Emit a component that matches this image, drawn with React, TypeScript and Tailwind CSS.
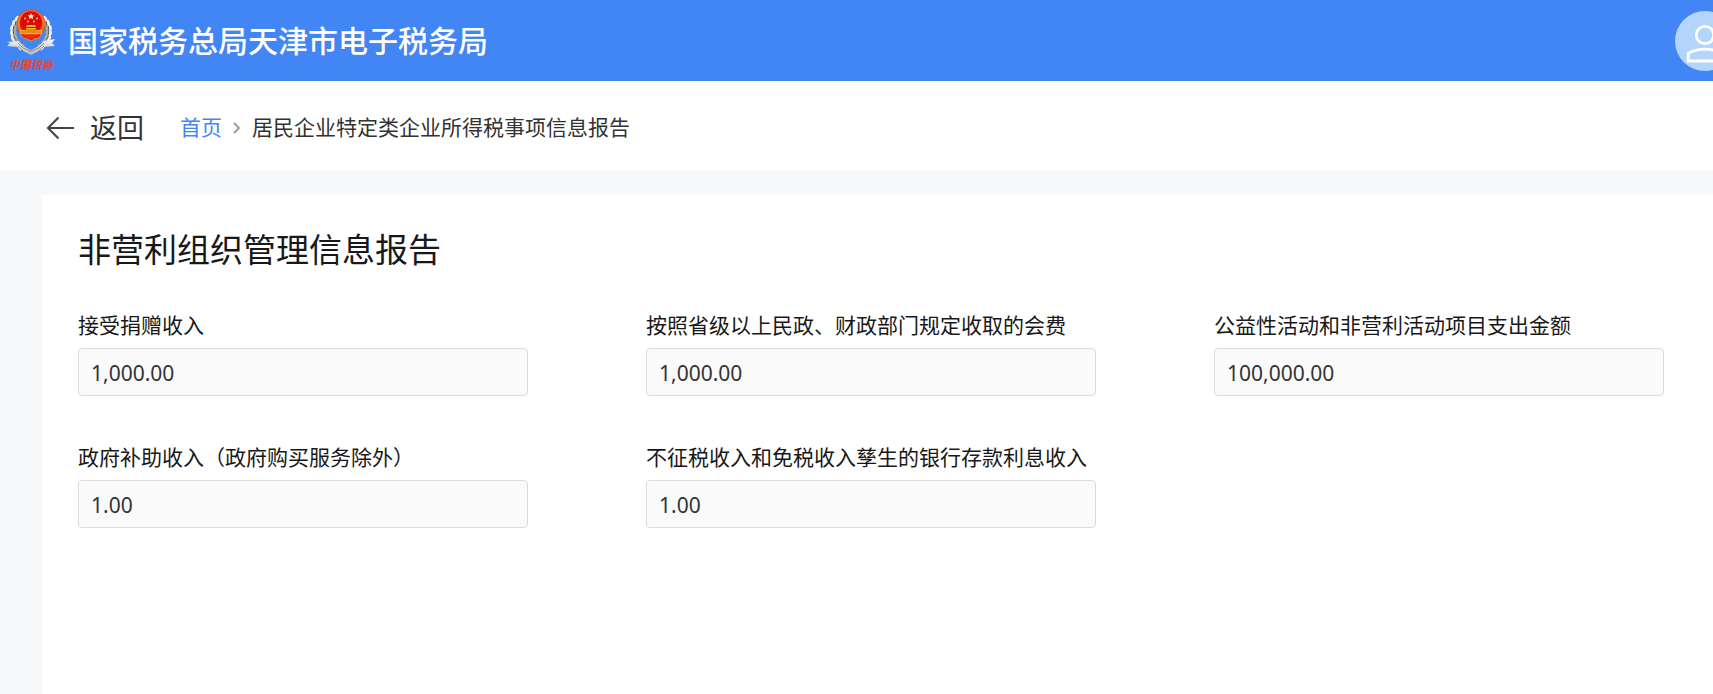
import { useId } from 'react';

interface Field {
  label: string;
  value: string;
}

const fields: Field[] = [
  { label: '接受捐赠收入', value: '1,000.00' },
  { label: '按照省级以上民政、财政部门规定收取的会费', value: '1,000.00' },
  { label: '公益性活动和非营利活动项目支出金额', value: '100,000.00' },
  { label: '政府补助收入（政府购买服务除外）', value: '1.00' },
  { label: '不征税收入和免税收入孳生的银行存款利息收入', value: '1.00' },
];

function Wreath() {
  const leaves = [
    [12, 10, 30],
    [9, 14, 15],
    [7, 19, 5],
    [7, 24, -10],
    [8, 29, -25],
    [11, 34, -40],
    [15, 38, -55],
  ];

  return (
    <g>
      {leaves.map(([x, y, angle]) => (
        <g key={y} transform={`rotate(${angle} ${x} ${y})`}>
          <ellipse cx={x - 1} cy={y} rx="1.9" ry="3" fill="#eeeeea" />
          <ellipse cx={x + 2} cy={y} rx="1.6" ry="2.8" fill="#a9aaa2" />
          <path
            d={`M${x + 0.5} ${y - 2}v4`}
            stroke="#4c4f48"
            strokeWidth="0.9"
            fill="none"
          />
        </g>
      ))}
    </g>
  );
}

function Emblem() {
  return (
    <svg viewBox="0 0 50 48" className="h-12 w-[50px]" aria-hidden="true">
      <defs>
        <linearGradient id="ribbon" x1="0" y1="0" x2="0" y2="1">
          <stop offset="0" stopColor="#f8f8f8" />
          <stop offset="1" stopColor="#b0b3b5" />
        </linearGradient>
        <radialGradient id="ring">
          <stop offset="0.72" stopColor="#e2300f" />
          <stop offset="0.86" stopColor="#f08a1c" />
          <stop offset="1" stopColor="#d94a2a" />
        </radialGradient>
      </defs>
      <Wreath />
      <g transform="matrix(-1 0 0 1 50 0)">
        <Wreath />
      </g>
      <path
        d="M1 33l11-1 5 5 8 4 8-4 5-5 11-2-3 4 3 3-11 1-7 5-6 3-6-3-7-5-11-1 3-3z"
        fill="url(#ribbon)"
      />
      <path
        d="M12 34l5 5 8 3 8-3 5-5M12 37l5 5M38 37l-5 5"
        stroke="#7b7e80"
        strokeWidth="0.8"
        fill="none"
      />
      <circle cx="25" cy="15" r="14.5" fill="url(#ring)" />
      <circle cx="25" cy="13" r="10.8" fill="#dc0810" />
      <path
        d="M14 24l5 1h12l5-1-3 5-4 1-4 2-4-2-4-1z"
        fill="#e0280f"
        stroke="#f0a028"
        strokeWidth="0.8"
      />
      <path
        d="M25 4l1 2.200 2.400.2-1.800 1.600.5 2.300-2.100-1.200-2.100 1.200.5-2.300-1.800-1.600 2.400-.2z"
        fill="#fff3b0"
      />
      <g fill="#ffd035">
        <circle cx="19" cy="9.500" r="1" />
        <circle cx="31" cy="9.500" r="1" />
        <circle cx="22" cy="12.500" r="1" />
        <circle cx="28" cy="12.500" r="1" />
        <path d="M21 16h8l1 2h-10zM20 19h10v2h6v4H14v-4h6z" fill="#f9b21f" />
      </g>
      <path
        d="M19 21h12M15 23h20M25 25v4M20 28h10"
        stroke="#d3410f"
        strokeWidth="0.8"
        fill="none"
      />
    </svg>
  );
}

function Avatar() {
  return (
    <button
      type="button"
      aria-label="用户"
      className="-mr-[22px] size-[60px] shrink-0 rounded-full bg-[#b3d4fb]"
    >
      <svg
        viewBox="0 0 60 60"
        className="size-full"
        fill="none"
        stroke="#fff"
        strokeWidth="2.8"
        aria-hidden="true"
      >
        <circle cx="30" cy="24" r="8.700" />
        <path d="M13.300 50V42.500C18 39.500 23 38.200 30 38.200S42 39.500 46.700 42.500V50z" />
      </svg>
    </button>
  );
}

function FormField({ label, value }: Field) {
  const id = useId();

  return (
    <div className="flex flex-col gap-[9px]">
      <label htmlFor={id} className="text-[21px] leading-7 whitespace-nowrap">
        {label}
      </label>
      <input
        id={id}
        type="text"
        readOnly
        defaultValue={value}
        className="h-12 w-full rounded border border-[#dcdcdc] bg-[#fafafa] px-3 pt-0.5 text-[21px] text-[#333]"
      />
    </div>
  );
}

export default function App() {
  return (
    <div className="flex min-h-screen flex-col overflow-hidden bg-[#f7f8fa] font-['Noto_Sans','Noto_Sans_CJK_SC',sans-serif] text-[#181818]">
      <header className="flex h-[81px] items-center justify-between bg-[#4285f4] pl-1.5">
        <div className="flex items-center gap-3">
          <div className="flex flex-col items-center">
            <Emblem />
            <span className="text-[11px] leading-4 font-bold text-[#dc4a3d] italic">
              中国税务
            </span>
          </div>
          <h1 className="text-[30px] leading-10 font-medium whitespace-nowrap text-white">
            国家税务总局天津市电子税务局
          </h1>
        </div>
        <Avatar />
      </header>

      <nav className="flex h-[90px] items-center bg-white pt-1 pl-[46px] text-[21px] text-[#333]">
        <button
          type="button"
          className="mr-9 flex items-center gap-4 text-[27px] leading-9"
        >
          <svg
            viewBox="0 0 28 24"
            className="h-6 w-7"
            fill="none"
            stroke="#444"
            strokeWidth="2"
            aria-hidden="true"
          >
            <path d="M12.500 1.500L2 12l10.500 10.500M2 12h26" />
          </svg>
          返回
        </button>
        <a href="#" className="text-[#4285f4]">
          首页
        </a>
        <svg
          viewBox="0 0 6 10"
          className="mx-3 h-2.5 w-1.5 overflow-visible"
          fill="none"
          stroke="#999"
          strokeWidth="1.800"
          aria-hidden="true"
        >
          <path d="M0 0l5 5-5 5" />
        </svg>
        <span>居民企业特定类企业所得税事项信息报告</span>
      </nav>

      <main className="mt-6 ml-[42px] flex-1 bg-white pt-[33px] pr-[49px] pl-9">
        <h2 className="text-[33px] leading-[44px]">非营利组织管理信息报告</h2>
        <form className="mt-[39px] grid grid-cols-3 gap-x-[118px] gap-y-[47px]">
          {fields.map((field) => (
            <FormField key={field.label} {...field} />
          ))}
        </form>
      </main>
    </div>
  );
}
